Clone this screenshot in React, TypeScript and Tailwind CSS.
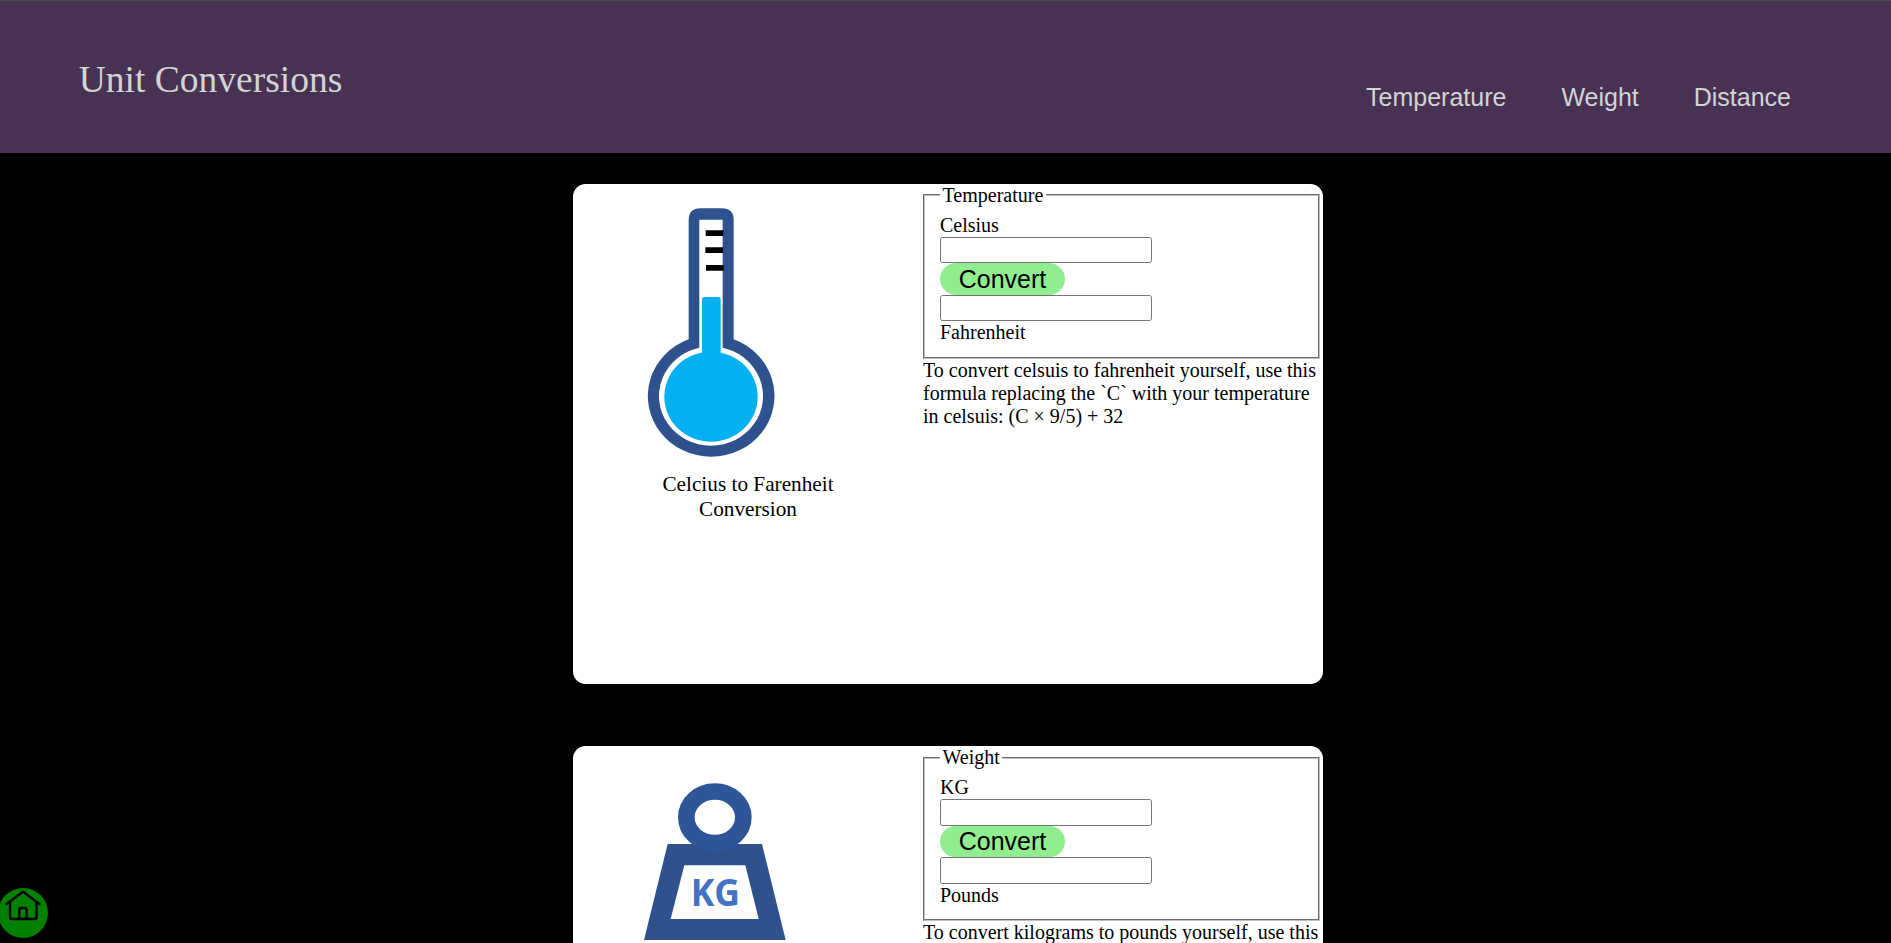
import type { ReactNode } from "react";

const serif = "font-['Liberation_Serif',serif]";
const sans = "font-['Liberation_Sans',sans-serif]";

function Thermometer() {
  return (
    <svg viewBox="39 42 1050 861" className="block h-[287px] w-[350px] shrink-0">
      <path
        d="M386 150Q386 115 421 115H486Q521 115 521 150V508A190 182 0 1 1 386 508Z"
        fill="#2f528f"
      />
      <path d="M418 149H488V533A156 149 0 1 1 418 533Z" fill="#fff" />
      <ellipse cx="453" cy="680" rx="140" ry="135" fill="#03b0f2" />
      <path d="M426 560V388Q426 381 433 381H475Q482 381 482 388V560Z" fill="#03b0f2" />
      <path d="M437 181H490V198H437ZM436 232H489V249H436ZM438 285H491V302H438Z" fill="#000" />
    </svg>
  );
}

function KiloWeight() {
  return (
    <svg viewBox="39 258 1050 861" className="block h-[287px] w-[350px] shrink-0">
      <path d="M323 552H606L677 840H252Z" fill="#2f528f" />
      <path d="M373 616H556L596 777H332Z" fill="#fff" />
      <ellipse cx="464.500" cy="472" rx="85.500" ry="77.500" fill="none" stroke="#2d5597" strokeWidth="50" />
      <text
        x="392"
        y="739"
        textLength="148"
        lengthAdjust="spacingAndGlyphs"
        fill="#4472c4"
        className="font-['Open_Sans',sans-serif] text-[114px] font-bold"
      >
        KG
      </text>
    </svg>
  );
}

interface ConverterProps {
  id: string;
  title: string;
  from: string;
  to: string;
  picture: ReactNode;
  caption: string;
  children: ReactNode;
}

function Converter({ id, title, from, to, picture, caption, children }: ConverterProps) {
  const field =
    "block h-[26.5px] w-[212px] rounded-[2.5px] border border-[#767676] bg-white px-1 outline-none";
  return (
    <section id={id} className="flex h-[500px] w-[750px] shrink-0 rounded-[12.5px] bg-white">
      <figure className="flex w-[350px] shrink-0 flex-col items-center">
        {picture}
        <figcaption className="w-[200px] pt-px text-center text-[21.25px] leading-[25px]">{caption}</figcaption>
      </figure>
      <div className="w-[397px] text-[20px] leading-[23px]">
        <fieldset className="border-2 border-[#c0c0c0] px-[15px] pt-[7px] pb-[12.5px] [border-style:groove]">
          <legend className="px-[2.5px]">{title}</legend>
          <label htmlFor={`${id}-from`} className="block">
            {from}
          </label>
          <input id={`${id}-from`} className={field} />
          <button
            type="button"
            className={`${sans} block h-[31.5px] w-[125px] rounded-full bg-[#90ee90] text-center text-[25px] leading-[31px]`}
          >
            Convert
          </button>
          <input id={`${id}-to`} className={field} />
          <label htmlFor={`${id}-to`} className="block">
            {to}
          </label>
        </fieldset>
        <p>{children}</p>
      </div>
    </section>
  );
}

export default function App() {
  return (
    <div className={`${serif} flex h-screen flex-col overflow-hidden bg-black text-black`}>
      <header className="flex h-[153px] shrink-0 items-start justify-between border-t border-[#4a4a4a] bg-[#483254] pr-[100px] pl-[78.75px] text-[#d3d3d3]">
        <h1 className="mt-[57px] text-[37.5px] leading-[43px]">Unit Conversions</h1>
        <nav className={`${sans} mt-[82px] flex gap-[55px] text-[25px] leading-[29px]`}>
          <a href="#temperature">Temperature</a>
          <a href="#weight">Weight</a>
          <a href="#distance">Distance</a>
        </nav>
      </header>
      <main className="flex flex-col gap-[62.4px] pt-[30.9px] pl-[573px]">
        <Converter
          id="temperature"
          title="Temperature"
          from="Celsius"
          to="Fahrenheit"
          picture={<Thermometer />}
          caption="Celcius to Farenheit Conversion"
        >
          To convert celsuis to fahrenheit yourself, use this formula replacing the `C` with your
          temperature in celsuis: (C × 9/5) + 32
        </Converter>
        <Converter
          id="weight"
          title="Weight"
          from="KG"
          to="Pounds"
          picture={<KiloWeight />}
          caption="Kilograms to Pounds Conversion"
        >
          To convert kilograms to pounds yourself, use this formula
        </Converter>
      </main>
      <a
        href="#"
        aria-label="Home"
        className="fixed bottom-[5px] left-[-2px] block size-[50px] rounded-full bg-[#008000]"
      >
        <svg viewBox="-2 18 50 50" className="block size-[50px]" fill="none" stroke="#000" strokeWidth="2.4">
          <path d="M6.500 34L23 21.800L39.500 34" strokeLinecap="round" strokeLinejoin="miter" />
          <path d="M10 31.500V47Q10 49 12 49H34.500Q36.500 49 36.500 47V31.500" />
          <path d="M19.300 49V39.500Q19.300 38 20.800 38H25Q26.500 38 26.500 39.500V49" />
        </svg>
      </a>
    </div>
  );
}
